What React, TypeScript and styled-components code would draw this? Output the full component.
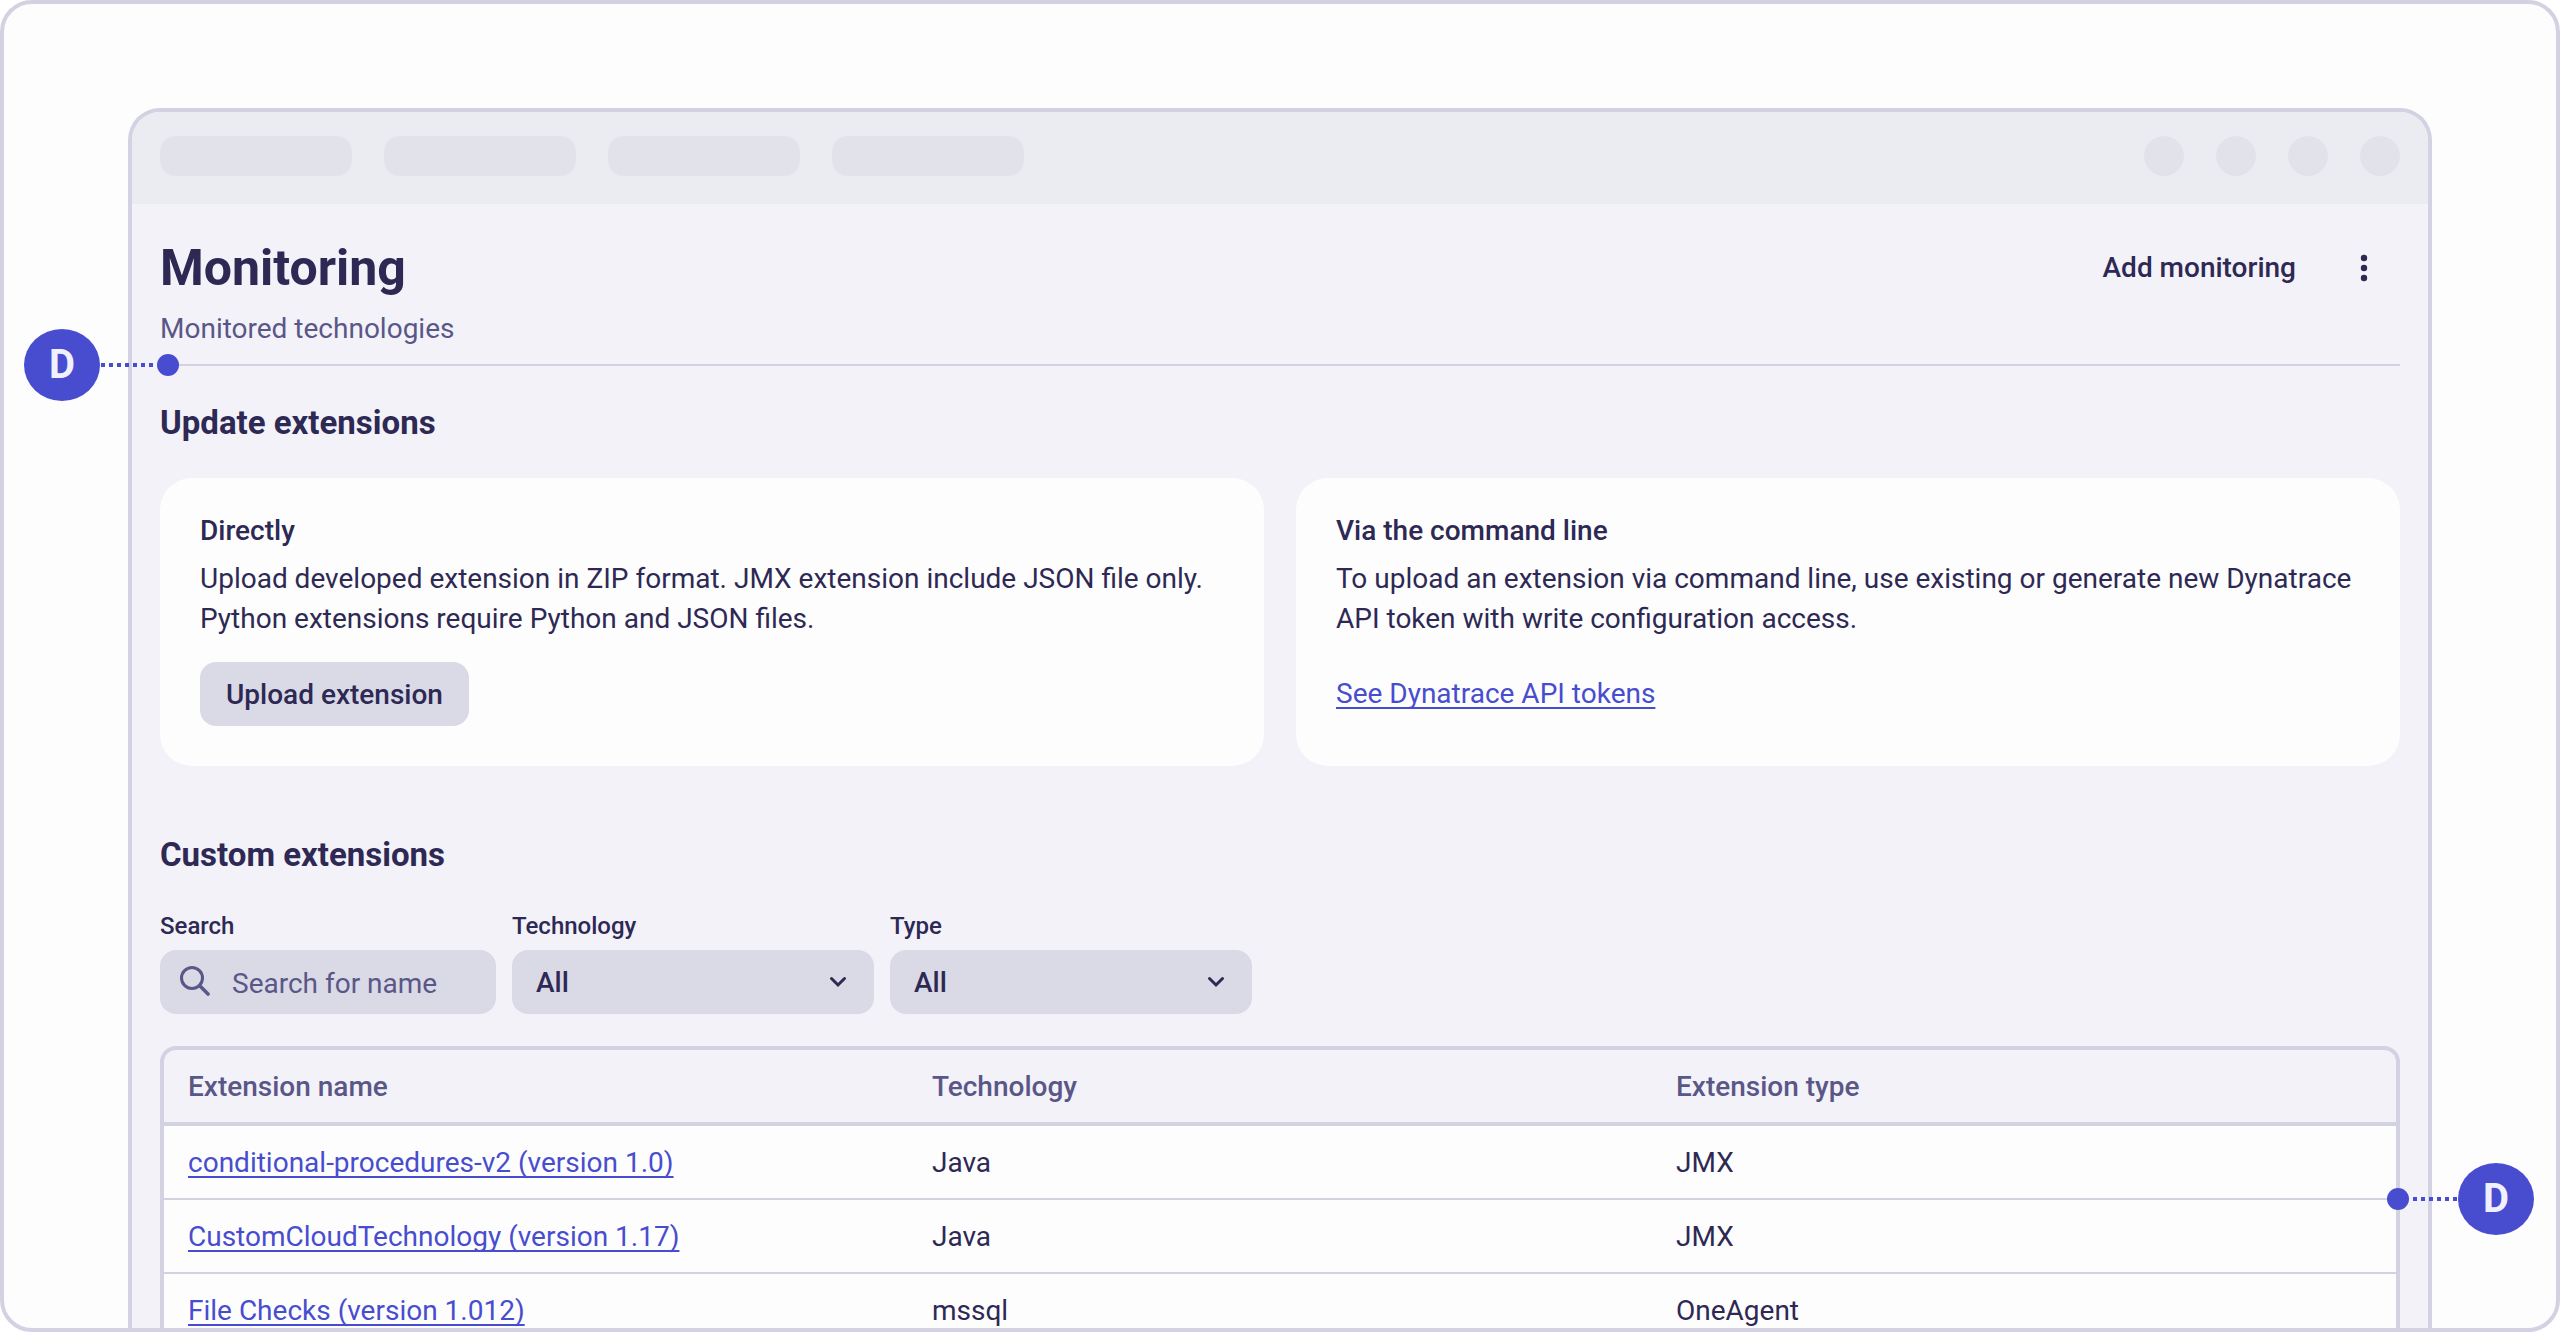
import React from "react";
import styled, { createGlobalStyle } from "styled-components";

const color = {
  line: "#d3d2e3",
  ink: "#2d2954",
  muted: "#5a5788",
  accent: "#484dcf",
  page: "#fdfdfe",
  surface: "#f3f2f8",
  bar: "#ebecf2",
  placeholder: "#e2e2eb",
  control: "#dadae6",
};

const GlobalStyle = createGlobalStyle`
  *, *::before, *::after { box-sizing: border-box; }
  body { margin: 0; background: #ffffff; }
  body, button, input, select {
    font-family: Roboto, "Noto Sans", sans-serif;
    font-size: 28px;
    line-height: 40px;
    color: ${color.ink};
  }
`;

const Stage = styled.div`
  display: flex;
  height: 100vh;
  padding: 104px 124px 0;
  border: 4px solid ${color.line};
  border-radius: 32px;
  background: ${color.page};
  overflow: hidden;
`;

const Window = styled.div`
  flex: 1;
  min-width: 0;
  border: 4px solid ${color.line};
  border-bottom: none;
  border-radius: 32px 32px 0 0;
  background: ${color.surface};
`;

const TopBar = styled.div`
  display: flex;
  justify-content: space-between;
  padding: 24px 28px 28px;
  border-radius: 28px 28px 0 0;
  background: ${color.bar};
`;

const BarGroup = styled.div`
  display: flex;
  gap: 32px;
`;

const BarShape = styled.span<{ $round?: boolean }>`
  width: ${(p) => (p.$round ? "40px" : "192px")};
  height: 40px;
  border-radius: ${(p) => (p.$round ? "50%" : "16px")};
  background: ${color.placeholder};
`;

const Content = styled.main`
  padding: 36px 28px 0;
`;

const PageHeader = styled.header`
  position: relative;
  display: flex;
  justify-content: space-between;
  align-items: flex-start;
  padding-bottom: 15px;
  border-bottom: 2px solid ${color.line};
`;

const Title = styled.h1`
  margin: 0 0 13px;
  font-size: 50px;
  line-height: 56px;
  font-weight: 700;
`;

const Subtitle = styled.p`
  margin: 0;
  color: ${color.muted};
`;

const Actions = styled.div`
  display: flex;
  align-items: center;
  gap: 48px;
  padding: 0 16px;
`;

const PlainButton = styled.button`
  display: flex;
  align-items: center;
  justify-content: center;
  min-width: 40px;
  height: 56px;
  padding: 0;
  border: none;
  background: none;
  font-weight: 500;
  cursor: pointer;
`;

const SectionTitle = styled.h2`
  margin: 0 0 35px;
  font-size: 33px;
  line-height: 40px;
  font-weight: 700;
`;

const Section = styled.section<{ $far?: boolean }>`
  padding-top: ${(p) => (p.$far ? "69px" : "37px")};
`;

const Cards = styled.div`
  display: grid;
  grid-template-columns: 1fr 1fr;
  gap: 32px;
`;

const Card = styled.article`
  padding: 33px 40px 40px;
  border-radius: 32px;
  background: ${color.page};
`;

const CardTitle = styled.h3`
  margin: 0 0 8px;
  font-size: 28px;
  font-weight: 500;
`;

const CardText = styled.p`
  margin: 0 0 23px;
`;

const CardAction = styled.div`
  display: flex;
  align-items: center;
  height: 64px;
`;

const FilledButton = styled.button`
  height: 64px;
  padding: 2px 26px 0;
  border: none;
  border-radius: 16px;
  background: ${color.control};
  font-weight: 500;
  cursor: pointer;
`;

const Link = styled.a`
  color: ${color.accent};
  text-decoration: underline;
  text-decoration-thickness: 2px;
  text-underline-offset: 4px;
  text-decoration-skip-ink: none;
`;

const Filters = styled.form`
  display: flex;
  gap: 16px;
  margin-bottom: 32px;
`;

const Field = styled.div<{ $width: number }>`
  display: flex;
  flex-direction: column;
  gap: 8px;
  width: ${(p) => p.$width}px;
`;

const FieldLabel = styled.label`
  font-size: 24px;
  line-height: 32px;
  font-weight: 500;
`;

const ControlBox = styled.div`
  position: relative;
  height: 64px;
  border-radius: 16px;
  background: ${color.control};
`;

const SearchInput = styled.input`
  width: 100%;
  height: 100%;
  padding: 2px 16px 0 72px;
  border: none;
  border-radius: 16px;
  background: none;
  &::placeholder {
    color: ${color.muted};
    opacity: 1;
  }
`;

const SelectInput = styled.select`
  appearance: none;
  width: 100%;
  height: 100%;
  padding: 2px 64px 0 24px;
  border: none;
  border-radius: 16px;
  background: none;
  font-weight: 500;
`;

const ControlIcon = styled.svg<{ $side: "left" | "right" }>`
  position: absolute;
  top: 16px;
  ${(p) => (p.$side === "left" ? "left: 18px;" : "right: 20px;")}
  width: 32px;
  height: 32px;
  fill: none;
  pointer-events: none;
`;

const TableFrame = styled.div`
  border: 4px solid ${color.line};
  border-bottom: none;
  border-radius: 16px 16px 0 0;
`;

const Table = styled.table`
  width: 100%;
  table-layout: fixed;
  border-spacing: 0;
  text-align: left;
`;

const HeadCell = styled.th`
  height: 76px;
  padding: 2px 24px 0;
  border-bottom: 4px solid ${color.line};
  color: ${color.muted};
  font-weight: 500;
`;

const Cell = styled.td`
  position: relative;
  height: 74px;
  padding: 2px 24px 0;
  border-bottom: 2px solid ${color.line};
  background: ${color.page};
`;

const Callout = styled.div<{ $side: "left" | "right" }>`
  position: absolute;
  z-index: 1;
  display: flex;
  align-items: center;
  flex-direction: ${(p) => (p.$side === "left" ? "row" : "row-reverse")};
  bottom: -37px;
  ${(p) => (p.$side === "left" ? "left: -136px;" : "right: -138px;")}
`;

const CalloutBadge = styled.span`
  width: 76px;
  height: 72px;
  border-radius: 50%;
  background: ${color.accent};
  color: #f0f0ff;
  font-size: 40px;
  line-height: 72px;
  font-weight: 700;
  text-align: center;
`;

const CalloutDots = styled.span<{ $side: "left" | "right" }>`
  width: ${(p) => (p.$side === "left" ? "57px" : "49px")};
  height: 4px;
  background: repeating-linear-gradient(
    ${(p) => (p.$side === "left" ? "to left" : "to right")},
    transparent 0 4px,
    ${color.accent} 4px 8px
  );
`;

const CalloutTip = styled.span`
  width: 22px;
  height: 22px;
  border-radius: 50%;
  background: ${color.accent};
`;

function Marker({ side }: { side: "left" | "right" }) {
  return (
    <Callout $side={side}>
      <CalloutBadge>D</CalloutBadge>
      <CalloutDots $side={side} />
      <CalloutTip />
    </Callout>
  );
}

function SelectField({ id, label }: { id: string; label: string }) {
  return (
    <Field $width={362}>
      <FieldLabel htmlFor={id}>{label}</FieldLabel>
      <ControlBox>
        <SelectInput id={id} defaultValue="all">
          <option value="all">All</option>
        </SelectInput>
        <ControlIcon $side="right" viewBox="0 0 32 32" aria-hidden="true">
          <path
            d="M9.5 12.5L16 19L22.5 12.5"
            stroke={color.ink}
            strokeWidth="3"
            strokeLinecap="round"
          />
        </ControlIcon>
      </ControlBox>
    </Field>
  );
}

const slots = [0, 1, 2, 3];

const extensions = [
  { name: "conditional-procedures-v2 (version 1.0)", technology: "Java", type: "JMX" },
  { name: "CustomCloudTechnology (version 1.17)", technology: "Java", type: "JMX" },
  { name: "File Checks (version 1.012)", technology: "mssql", type: "OneAgent" },
];

export default function App() {
  return (
    <>
      <GlobalStyle />
      <Stage>
        <Window>
          <TopBar>
            <BarGroup>
              {slots.map((s) => (
                <BarShape key={s} />
              ))}
            </BarGroup>
            <BarGroup>
              {slots.map((s) => (
                <BarShape key={s} $round />
              ))}
            </BarGroup>
          </TopBar>
          <Content>
            <PageHeader>
              <div>
                <Title>Monitoring</Title>
                <Subtitle>Monitored technologies</Subtitle>
              </div>
              <Actions>
                <PlainButton type="button">Add monitoring</PlainButton>
                <PlainButton type="button" aria-label="More actions">
                  <svg width="32" height="32" viewBox="0 0 32 32" fill={color.ink}>
                    <circle cx="16" cy="6" r="3.2" />
                    <circle cx="16" cy="16" r="3.2" />
                    <circle cx="16" cy="26" r="3.2" />
                  </svg>
                </PlainButton>
              </Actions>
              <Marker side="left" />
            </PageHeader>

            <Section>
              <SectionTitle>Update extensions</SectionTitle>
              <Cards>
                <Card>
                  <CardTitle>Directly</CardTitle>
                  <CardText>
                    Upload developed extension in ZIP format. JMX extension include JSON file only.
                    <br />
                    Python extensions require Python and JSON files.
                  </CardText>
                  <CardAction>
                    <FilledButton type="button">Upload extension</FilledButton>
                  </CardAction>
                </Card>
                <Card>
                  <CardTitle>Via the command line</CardTitle>
                  <CardText>
                    To upload an extension via command line, use existing or generate new Dynatrace
                    <br />
                    API token with write configuration access.
                  </CardText>
                  <CardAction>
                    <Link href="#tokens">See Dynatrace API tokens</Link>
                  </CardAction>
                </Card>
              </Cards>
            </Section>

            <Section $far>
              <SectionTitle>Custom extensions</SectionTitle>
              <Filters>
                <Field $width={336}>
                  <FieldLabel htmlFor="search">Search</FieldLabel>
                  <ControlBox>
                    <ControlIcon $side="left" viewBox="0 0 32 32" aria-hidden="true">
                      <circle cx="14" cy="12" r="10.5" stroke={color.muted} strokeWidth="3" />
                      <path
                        d="M22 20L30 28"
                        stroke={color.muted}
                        strokeWidth="3.6"
                        strokeLinecap="round"
                      />
                    </ControlIcon>
                    <SearchInput id="search" type="text" placeholder="Search for name" />
                  </ControlBox>
                </Field>
                <SelectField id="technology" label="Technology" />
                <SelectField id="type" label="Type" />
              </Filters>

              <TableFrame>
                <Table>
                  <thead>
                    <tr>
                      <HeadCell scope="col">Extension name</HeadCell>
                      <HeadCell scope="col">Technology</HeadCell>
                      <HeadCell scope="col">Extension type</HeadCell>
                    </tr>
                  </thead>
                  <tbody>
                    {extensions.map((e, i) => (
                      <tr key={e.name}>
                        <Cell>
                          <Link href="#extension">{e.name}</Link>
                        </Cell>
                        <Cell>{e.technology}</Cell>
                        <Cell>
                          {e.type}
                          {i === 0 && <Marker side="right" />}
                        </Cell>
                      </tr>
                    ))}
                  </tbody>
                </Table>
              </TableFrame>
            </Section>
          </Content>
        </Window>
      </Stage>
    </>
  );
}
